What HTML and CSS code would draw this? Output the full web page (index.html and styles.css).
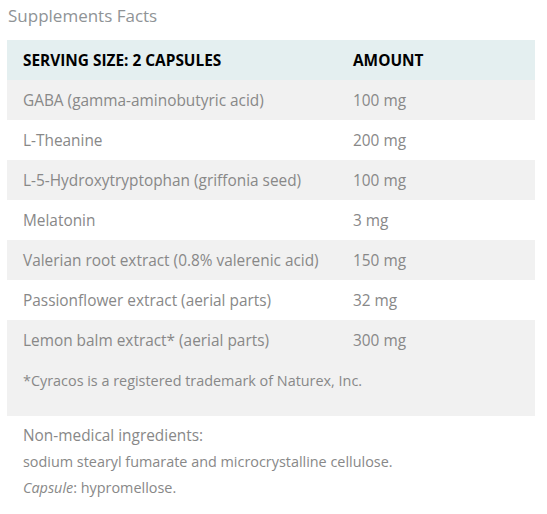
FILE: index.html
```html
<!DOCTYPE html>
<html>
<head>
<meta charset="utf-8">
<link rel="stylesheet" href="styles.css">
</head>
<body>
<div class="wrap">
  <h2 class="title">Supplements Facts</h2>
  <table class="facts">
    <thead>
      <tr><th class="c1">SERVING SIZE: 2 CAPSULES</th><th class="c2">AMOUNT</th></tr>
    </thead>
    <tbody>
      <tr class="odd"><td>GABA (gamma-aminobutyric acid)</td><td>100 mg</td></tr>
      <tr><td>L-Theanine</td><td>200 mg</td></tr>
      <tr class="odd"><td>L-5-Hydroxytryptophan (griffonia seed)</td><td>100 mg</td></tr>
      <tr><td>Melatonin</td><td>3 mg</td></tr>
      <tr class="odd"><td>Valerian root extract (0.8% valerenic acid)</td><td>150 mg</td></tr>
      <tr><td>Passionflower extract (aerial parts)</td><td>32 mg</td></tr>
      <tr class="odd"><td>Lemon balm extract* (aerial parts)</td><td>300 mg</td></tr>
      <tr class="odd note"><td colspan="2">*Cyracos is a registered trademark of Naturex, Inc.</td></tr>
    </tbody>
  </table>
  <div class="extra">
    <p class="lead">Non-medical ingredients:</p>
    <p>sodium stearyl fumarate and microcrystalline cellulose.</p>
    <p><em>Capsule</em>: hypromellose.</p>
  </div>
</div>
</body>
</html>
```

FILE: styles.css
```css
html, body { margin: 0; padding: 0; background: #fff; }
body { font-family: "Open Sans", "Liberation Sans", sans-serif; color: #888; }
.wrap { padding: 0 12px 0 7px; }
.title { margin: 0; padding-top: 4px; height: 36px; font-size: 17px; font-weight: 400; color: #8f9396; line-height: 24px; padding-left: 1px; }
.facts { width: 528px; border-collapse: collapse; table-layout: fixed; }
.facts th, .facts td { text-align: left; padding: 0 0 0 16px; height: 40px; vertical-align: middle; }
.facts th { font-size: 15.4px; font-weight: 700; color: #000; background: #e4eff0; }
.facts .c1 { width: 314px; }
.facts td { font-size: 15.4px; color: #888; }
.facts tr.odd td { background: #f1f1f1; }
.facts tr.note td { height: 56px; font-size: 14.4px; vertical-align: top; padding-top: 11px; box-sizing: border-box; }
.extra { padding: 7px 0 0 16px; }
.extra p { margin: 0; font-size: 14.4px; line-height: 26px; color: #888; }
.extra p.lead { font-size: 15.4px; }
```
